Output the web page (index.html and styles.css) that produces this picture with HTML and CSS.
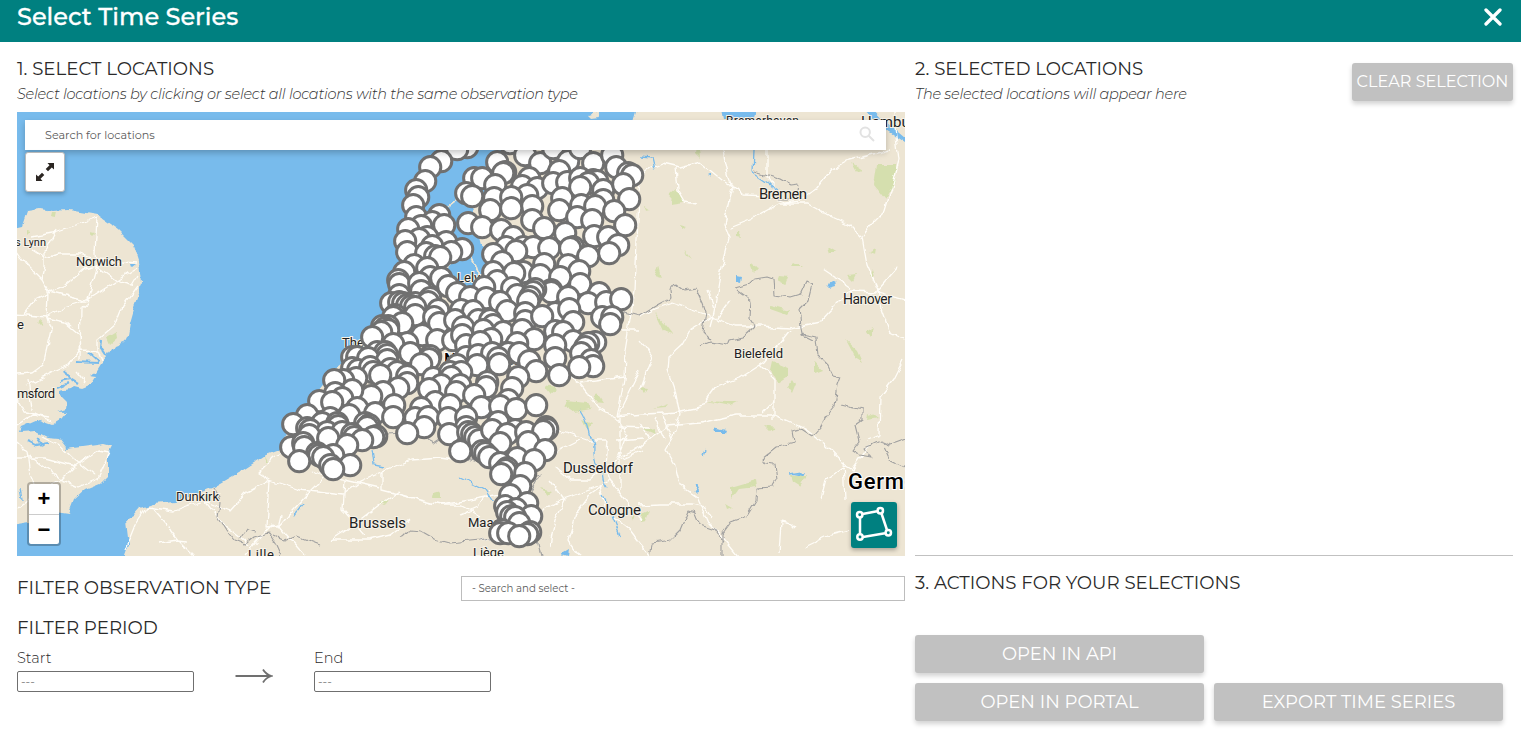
FILE: index.html
```html
<!DOCTYPE html>
<html lang="en">
<head>
<meta charset="utf-8">
<title>Select Time Series</title>
<link rel="stylesheet" href="styles.css">
</head>
<body>
<header class="topbar">
  <h1 class="topbar-title">Select Time Series</h1>
  <button class="close" aria-label="Close"><svg width="18" height="18" viewBox="0 0 18 18"><path d="M2 2 16 16M16 2 2 16"/></svg></button>
</header>
<main class="columns">
  <section class="left">
    <h2 class="heading h-locations">1. SELECT LOCATIONS</h2>
    <p class="hint hint-left">Select locations by clicking or select all locations with the same observation type</p>
    <div class="map">
      <svg class="map-canvas" width="888" height="444" viewBox="17 112 888 444">
        <defs>
          <marker id="pin" markerUnits="userSpaceOnUse" markerWidth="26" markerHeight="26" refX="13" refY="13" viewBox="0 0 26 26"><circle class="pin" cx="13" cy="13" r="10.600"/></marker>
          <filter id="rough" filterUnits="userSpaceOnUse" x="0" y="95" width="925" height="480" color-interpolation-filters="sRGB">
            <feTurbulence type="fractalNoise" baseFrequency="0.09" numOctaves="2" seed="4"/>
            <feDisplacementMap in="SourceGraphic" scale="7" xChannelSelector="R" yChannelSelector="G"/>
          </filter>
        </defs>
        <rect class="sea" x="17" y="112" width="888" height="444"/>
        <g filter="url(#rough)">
        <!-- England -->
        <path class="land" d="M3 230L22 226L27 211L40 209L52 211L68 210L98 215L118 229L134 245L139 261L141 283L138 298L134 309L130 323L128 334L124 342L114 346L107 357L101 364L96 372L90 375L97 376L92 384L82 388L74 386L70 389L60 391L60 395L67 402L66 409L50 414L38 411L67 412L60 420L52 425L38 420L22 427L20 432L36 431L48 437L60 438L67 447L66 449L82 447L104 444L112 446L108 454L108 476L100 484L85 490L74 500L69 513L55 511L42 520L3 526Z"/>
        <path class="water-line" d="M28 441 36 445 48 443M38 437 44 446M77 362 97 363M88 352 98 361M102 340 101 348 107 357M60 381 70 379 78 384M65 370 72 382M58 388 68 384"/>
        <!-- Continent -->
        <path class="land" d="M125 580L125 556L129 545L126 520L133 516L140 508L153 504L176 502L199 493L214 487L240 472L266 455L280 450L290 425L330 375L365 345L390 300L404 250L416 217L434 212L447 216L445 235L462 247L464 262L447 274L455 290L480 297L495 290L488 270L480 237L470 215L480 200L494 178L503 154L535 140L630 150L632 122L640 95H930V580Z"/>
        <path class="sea" d="M463 254L483 246L494 264L492 286L476 288L458 281L447 270ZM719 95H758L754 120H724ZM848 95H861L886 122L905 138V143L880 126Z"/>
        <path class="land" d="M589 115 598 112 600 117 592 118Z"/>
        <g class="wood">
          <path d="M877 165L896 165 895 181 885 199 874 185ZM671 194 677 189 684 202 670 204ZM736 230 742 237 736 236ZM779 276 788 277 785 285 777 281ZM750 264 757 267 753 272ZM770 306 790 311 787 315 770 309ZM697 137 700 157 695 152ZM772 362 787 368 787 377 778 383 770 371ZM815 362 823 371 815 374ZM846 340 858 351 863 362 855 357ZM731 487 755 480 756 487 739 489 731 499ZM791 475 808 475 801 486 793 481ZM725 505 732 509 727 511ZM794 379 797 384 793 394 788 387ZM763 426 775 428 769 432ZM655 312 667 325 674 334 664 331ZM852 163 863 170 857 172ZM668 404 654 409 665 408ZM705 401 730 406 738 402 726 402ZM544 386 557 388 550 394ZM566 400 588 402 591 409 574 412 563 405ZM597 393 603 402 594 401ZM640 387 648 388 645 393ZM642 514 650 510 646 521 641 522ZM868 412 877 418 867 420ZM684 250 691 259 687 256ZM876 248 875 254 868 252ZM874 327 866 332 870 338ZM687 226 682 229 680 224ZM645 206 651 210 646 211ZM654 275 658 266 661 277ZM52 212 57 212 56 217 51 216ZM107 338 117 332 118 338 110 345ZM38 322 42 319 41 325ZM26 230V235L30 231ZM90 231 95 232 92 235ZM264 456 267 462 265 462ZM433 495 440 493 440 499 432 499ZM630 512 634 513 632 520ZM540 488 552 491 547 495ZM380 502 389 499 386 505ZM582 420 592 424 588 431ZM643 430 656 428 655 435ZM795 262 802 266 792 266ZM828 246 838 252 830 252ZM848 275 856 274 853 280ZM870 276 873 270 875 277Z"/>
        </g>
        <g class="road">
          <path d="M32 237 52 233 70 227 97 218 95 253 97 268 87 303 81 308 80 360M56 230 44 252 44 267 41 280 48 292 47 318 51 330 43 365 32 373 17 374M17 252 26 265 41 280M32 250 44 258 60 254 80 254 96 260 137 263M24 314 35 300 66 285 85 269 97 266 118 282 132 285 138 275M48 292 85 301 112 284 118 280 137 268M17 314 47 317 62 308 84 301M47 318 65 322 80 335 81 350 68 365 51 373 25 387M97 350 97 340 115 325 122 307 138 286M81 350 98 351 102 362M76 371 85 382M17 398 24 412 34 414 52 422M28 380 32 410M17 425 32 415 50 418M17 442 27 452 30 475 34 485M17 458 45 458 75 466 62 479 40 490 17 509M75 466 98 450 110 452 98 479 78 487 60 479 30 457M42 436 58 444 75 460 95 476"/>
          <path d="M125 550 135 525 147 507 175 511 205 500 224 525 250 545M151 507 165 523 178 540 195 557M205 500 230 511 246 493 270 480M187 541 178 540 160 543M270 480 267 527 278 525 305 556M270 480 258 473 273 458 290 450M270 480 300 490 343 495 360 482 382 472 382 490 440 505 470 500 520 490 530 480M278 527 293 509 308 493 323 478 340 467 360 454M245 555 263 534 272 525 278 527 281 515M330 541 354 525 380 505 399 491M382 472 412 460 440 458 460 461M312 470 345 480 380 488M330 540 370 540 390 535 410 520"/>
          <path d="M640 177 652 168 663 163 680 167 700 162 722 180 733 186 743 196 770 197 785 202 800 200 815 190 831 170 850 160 890 150M723 150 729 178 733 188 724 224 730 237 720 275 714 312 710 327M676 168 678 190 685 202 698 204M730 227 755 217 780 203 807 203 830 216 850 225 862 237 867 265 878 290 880 305 890 333 905 340M862 237 870 226 885 211 894 180 899 160 893 112M640 317 655 309 672 303 712 317 735 326 760 326 790 328 820 322 833 308 850 291 878 292 915 303M714 307 708 290M717 318 730 300M824 270 842 282 852 289M877 291 898 267M767 150 767 177 780 197M714 315 690 330 682 345 669 357 668 370 675 390 680 415 672 440 666 450 675 465 680 485 697 497 708 522 725 540 738 556M640 390 652 357 640 340M617 459 640 447 667 426 700 423 735 415 775 415 805 429 825 444 843 463 852 470 870 445M617 417 645 414 680 412 700 408 715 387 740 378 765 362 775 349 790 330M760 365 774 380 774 420M774 400 762 413M640 505 660 504 692 504 705 507 712 519M555 467 570 480 590 480 606 466 642 450M607 440 605 465 610 480 625 500 642 520M610 480 590 494 575 515 568 540 580 556M550 480 565 500 555 520 550 545M617 459 627 434 618 420 600 410 580 385 560 370M580 383 625 377M525 408 560 430 590 440 607 440M617 417 624 380 625 350 635 290 637 240 640 175M610 330 640 330M640 370 620 410 620 490M617 427 650 428M843 463 845 500M852 470 845 466 826 480 821 499M779 553 781 522 790 524 795 529M805 547 830 535 850 530M867 440 879 435 880 397 893 380 903 360"/>
          <path d="M616 440 644 438M655 418 665 440M662 415 672 440M640 423 650 440M480 540 500 535 560 500 600 485M600 485 605 510 630 530 650 556M525 480 560 450 580 440M460 515 478 507 490 490M345 480 343 510 365 535M440 505 462 505 480 515"/>
        </g>
        <g class="river">
          <path d="M580 410C590 425 587 435 592 440S590 455 598 465 600 480 607 489M754 150 753 173 765 181 778 190M640 156 652 157 655 170M372 450 374 465 384 467M460 478 485 490 500 512 540 530M715 430 722 432 725 429M790 474 802 472M694 491 699 485M703 455 705 450M294 515 303 503M602 495 610 510 620 535M20 488 22 500"/>
        </g>
        <g class="lake"><path d="M825 285 834 280 835 286 828 288ZM737 275 742 276 741 282 737 281ZM708 175 712 173 712 177ZM714 430 722 431 725 429 724 433 715 433ZM694 492 697 485 700 485 697 491ZM793 474 806 472 804 476ZM562 554 569 550 568 556ZM131 264 136 264 132 267Z"/></g>
        <g class="border">
          <path d="M213 488 220 502 218 518 225 529 235 541 245 545 255 537 268 533 276 545 281 556M240 540 247 530 256 532M272 535 285 541 297 536 320 545M337 443 343 448 345 432 362 432 372 445 375 435 400 433M427 440 433 443 445 435 460 457 480 463 520 480 540 475 532 490 525 510 530 530 540 545 543 556M400 537 405 535 410 530 421 531 435 539 450 543 480 540 495 536"/>
          <path d="M610 325 625 312 640 316 658 305 671 298 670 290 675 284 683 290 695 288 702 303 705 312 702 332 710 340M736 288 750 284 755 279 767 277 773 279 774 295 790 297 800 294 806 281 812 284 808 300 799 309 800 318 802 335 812 340M737 290 751 300 750 318 755 326 743 337 730 340 728 345 710 342 700 346M802 334 816 337 818 355 828 365 833 375 841 377 838 385 835 405 825 417 821 427 812 437 800 429 792 431 794 443 777 447 762 459 765 463 775 464 777 480 773 487 757 488 756 501 747 516 730 522 722 533 722 560M841 404 862 409 862 420 855 425 859 441 852 450 860 455 871 457 865 448 880 441 890 445 915 436M884 447 890 460 915 472M650 560 652 543 670 540 680 530 688 511 695 513 700 525 715 530 723 542M755 172 765 175 781 180 790 185 798 184 796 198 787 199 772 199"/>
        </g>
        <path class="road dike" d="M438 214 463 195M468 252 475 264 479 277"/>
        </g>
        <g class="place">
          <text x="15" y="246" textLength="31" font-size="11">s Lynn</text>
          <text x="76" y="265.500" textLength="46" font-size="13">Norwich</text>
          <text x="17" y="329" font-size="13">e</text>
          <text x="17" y="398" textLength="38" font-size="13">msford</text>
          <text x="176" y="500.500" textLength="43" font-size="13">Dunkirk</text>
          <text x="349" y="528" textLength="57" font-size="15">Brussels</text>
          <text x="248" y="559" textLength="26" font-size="13">Lille</text>
          <text x="473" y="557" textLength="31" font-size="13">Liège</text>
          <text x="468" y="527" font-size="13">Maastricht</text>
          <text x="588" y="515" textLength="53" font-size="15">Cologne</text>
          <text x="563" y="473" textLength="70" font-size="15">Dusseldorf</text>
          <text x="734" y="357.500" textLength="49" font-size="13">Bielefeld</text>
          <text x="843" y="304" textLength="49" font-size="14">Hanover</text>
          <text x="759" y="199" textLength="48" font-size="15">Bremen</text>
          <text x="726" y="125" textLength="73" font-size="12">Bremerhaven</text>
          <text x="861" y="127" font-size="15">Hamburg</text>
          <text x="457" y="282" font-size="13">Lelystad</text>
          <text x="342" y="347" font-size="13">The Hague</text>
          <text class="country" x="444" y="365" font-size="17">Netherlands</text>
          <text class="country" x="848" y="489" textLength="93" font-size="22">Germany</text>
        </g>
        <polyline class="pins" transform="translate(.2 .2)" points="467,147 457,149 441,161 430,167 425,181 416,190 418,197 413,205 510,143 525,155 540,163 553,148 568,161 580,148 593,163 612,155 616,167 628,173 632,175 497,162 505,172 503,173 474,178 482,178 495,185 529,178 559,171 522,186 537,188 553,183 567,182 580,178 593,180 597,181 588,183 580,187 603,190 623,184 629,199 466,193 472,196 527,195 494,198 511,197 562,198 603,200 581,205 595,206 532,206 490,210 511,208 559,210 614,211 577,217 592,220 532,220 468,223 482,227 501,230 544,228 565,233 625,225 594,236 608,237 618,245 609,253 513,237 506,247 493,254 523,247 533,247 516,251 549,248 573,247 570,248 588,256 502,262 544,264 568,265 579,271 493,272 523,272 514,273 540,275 560,277
        416,217 439,215 432,222 421,226 444,225 408,229 427,237 419,239 405,241 446,242 432,246 407,252 462,249 451,252 426,253 435,256 440,257 414,265 404,272 427,268 430,277 398,280 399,284 419,283 441,278 448,286 421,291 399,295 457,293 497,281 484,287 470,297 512,288 486,298 517,295 500,302 551,290 551,292 535,289 533,292 530,297 528,301 580,284 568,297 599,293 588,303 606,302 621,299
        391,303 399,302 403,303 407,305 415,303 430,298 428,302 411,306 415,307 438,310 395,315 393,317 415,315 402,323 461,310 434,317 473,311 439,323 507,311 525,313 525,321 555,313 542,316 569,309 573,322 602,317 612,317 610,324 455,320 478,320 490,320 463,327 493,325 483,330 503,332 522,330 555,331 563,332 534,339 573,341
        388,326 382,326 385,328 388,330 381,332 372,337 422,335 407,343 393,344 437,340 453,340 462,335 466,345 491,339 480,342 515,347 517,343 555,345 595,342 588,343 585,347 581,353 555,358 591,360 593,366 579,367 559,375
        377,352 352,357 357,357 385,352 387,355 368,358 387,360 410,353 430,356 429,359 421,364 466,357 478,355 492,353 508,353 519,353 457,365 498,358 499,364 477,365 529,361 536,371 352,368 358,370 370,367 373,372 390,369 397,372 380,375 407,376 356,378 343,380 334,380 407,383 398,388 383,392 371,396 352,390 335,393 319,401 342,398 332,402
        433,378 450,372 461,372 451,377 518,377 487,382 441,385 460,385 429,389 456,392 486,387 474,395 512,388 435,402 450,405 481,407 508,400 500,406 516,409 536,405 357,408 394,405 375,413 393,417 349,415 307,415 293,424 330,418 322,423 307,428 310,430 337,423 338,426 327,432 309,435 342,432 328,438 365,423 369,425 367,427 352,434 354,437 376,436 373,437 362,440 347,445 291,447 303,443 304,447 317,453 319,455 333,455 323,457 299,461 350,465 330,465 333,469
        421,408 415,418 428,417 424,427 407,433 448,418 466,417 466,427 449,434 468,432 472,434 475,437 479,440 460,451 498,422 492,430 515,430 507,434 526,432 546,427 547,429 543,431 528,442 500,443 545,450 482,451 485,453 489,457 517,458 500,463 534,460 507,468 505,470 501,474 525,473 520,486 510,495 527,503 505,506 516,509 507,512 511,516 531,516 515,517 519,523 502,530 500,533 508,533 530,532 527,534 519,536"/>
      </svg>
      <div class="search"><span class="search-text">Search for locations</span>
        <svg width="17" height="17" viewBox="0 0 17 17"><circle cx="6.200" cy="6.200" r="4.700"/><path d="M9.700 9.700 15 15"/></svg>
      </div>
      <button class="expand" aria-label="Expand"><svg width="20" height="20" viewBox="0 0 20 20"><path class="fill" d="M12.500 1H19v6.500L16.800 5.500 13 9.300 10.700 7 14.500 3.200ZM7.500 19H1v-6.500L3.200 14.500 7 10.700 9.300 13 5.500 16.800Z"/></svg></button>
      <div class="zoom"><button class="zoom-btn">+</button><button class="zoom-btn">−</button></div>
      <button class="polygon" aria-label="Draw polygon"><svg width="46" height="46" viewBox="0 0 46 46"><path d="M9 15V32M11.500 12 26 9.300M30.500 11.500 36 28M12 35 34 31.200"/><circle cx="8.700" cy="12.700" r="2.700"/><circle cx="29.300" cy="8.700" r="2.700"/><circle cx="37.300" cy="30.700" r="2.700"/><circle cx="9" cy="35" r="2.700"/></svg></button>
    </div>
    <div class="type-row">
      <h2 class="heading h-type">FILTER OBSERVATION TYPE</h2>
      <div class="type-select">- Search and select -</div>
    </div>
    <h2 class="heading h-period">FILTER PERIOD</h2>
    <div class="period">
      <label class="date"><span class="date-label">Start</span><input class="date-input" placeholder="---"></label>
      <svg class="arrow" width="38" height="16" viewBox="0 0 38 16"><path d="M.500 8H36M28 1.500Q31 6.500 36.500 8 31 9.500 28 14.500"/></svg>
      <label class="date"><span class="date-label">End</span><input class="date-input" placeholder="---"></label>
    </div>
  </section>
  <section class="right">
    <div class="selected">
      <div class="selected-text">
        <h2 class="heading h-selected">2. SELECTED LOCATIONS</h2>
        <p class="hint hint-right">The selected locations will appear here</p>
      </div>
      <button class="btn clear">CLEAR SELECTION</button>
    </div>
    <h2 class="heading h-actions">3. ACTIONS FOR YOUR SELECTIONS</h2>
    <div class="actions">
      <button class="btn b-api">OPEN IN API</button><span></span>
      <button class="btn b-portal">OPEN IN PORTAL</button>
      <button class="btn b-export">EXPORT TIME SERIES</button>
    </div>
  </section>
</main>
</body>
</html>
```
FILE: styles.css
```css
* { box-sizing: border-box; }
body { margin: 0; height: 734px; overflow: hidden; background: #fff; color: #2a2a2a; font-family: Montserrat, Inter, "Open Sans", sans-serif; }
h1, h2, p { margin: 0; font-weight: 400; }
button { border: 0; padding: 0; font-family: inherit; }
svg { display: block; fill: none; }

.topbar { height: 42px; padding: 0 19px 8px 17px; background: #008080; color: #fff; display: flex; justify-content: space-between; align-items: center; }
.topbar-title { font-size: 24px; font-weight: 500; line-height: 34px; white-space: nowrap; -webkit-text-stroke: .3px #fff; }
.close { background: none; }
.close svg { stroke: #fff; stroke-width: 3.300; stroke-linecap: round; }

.columns { display: grid; grid-template-columns: 888px 598px; column-gap: 10px; padding-left: 17px; }
.left { padding-top: 15px; }
.heading { font-size: 18.200px; line-height: 24px; white-space: nowrap; }
.hint { font-size: 14.500px; font-weight: 300; font-style: italic; letter-spacing: -.24px; line-height: 20px; white-space: nowrap; margin-top: 3px; color: #333; }

.map { position: relative; height: 444px; margin-top: 8px; overflow: hidden; }
.sea, .lake { fill: #78bbec; }
.land { fill: #ede5d3; }
.wood { fill: #d5dfae; }
.road { stroke: #fffdf8; stroke-width: 1.300; stroke-linejoin: round; }
.dike { stroke: #ede5d3; stroke-width: 2; }
.river { stroke: #78bbec; stroke-width: 1.300; }
.water-line { stroke: #78bbec; stroke-width: 2.200; }
.border { stroke: #a0a0a0; stroke-width: 1.100; stroke-linejoin: round; }
.place { font-family: Roboto, sans-serif; fill: #222; stroke: #f6f2e8; stroke-width: 2px; paint-order: stroke; }
.country { font-weight: 500; fill: #000; stroke: #fff; }
.pins { marker: url(#pin); }
.pin { fill: #fff; stroke: #707070; stroke-width: 3; }

.search { position: absolute; left: 8px; top: 8px; width: 861px; height: 30px; padding: 0 10px 0 20px; background: #fff; box-shadow: 0 3px 6px rgba(0,0,0,.22); display: flex; align-items: center; justify-content: space-between; font-size: 11.200px; color: #5c5c5c; }
.search svg { stroke: #e2e2e2; stroke-width: 2; margin-bottom: 2px; }
.expand { position: absolute; left: 8px; top: 40px; width: 40px; height: 40px; background: #fff; border: 1px solid #b9b9b9; border-radius: 3px; box-shadow: 0 2px 4px rgba(0,0,0,.25); display: grid; place-items: center; }
.expand .fill { fill: #2b2622; }
.zoom { position: absolute; left: 10px; top: 370px; width: 34px; height: 64px; border: 2px solid rgba(0,0,0,.25); border-radius: 4px; background: #fff; background-clip: padding-box; display: grid; grid-template-rows: 30px 30px; }
.zoom-btn { background: none; color: #000; font-family: "Liberation Sans", sans-serif; font-size: 22px; font-weight: 700; line-height: 28px; }
.zoom-btn + .zoom-btn { border-top: 1px solid #ccc; }
.polygon { position: absolute; left: 834px; top: 390px; width: 46px; height: 46px; background: #008080; border-radius: 3px; box-shadow: 0 2px 4px rgba(0,0,0,.3); }
.polygon svg { stroke: #fff; stroke-width: 2.500; }

.type-row { display: flex; justify-content: space-between; align-items: flex-start; height: 25px; margin-top: 20px; }
.type-select { width: 444px; height: 25px; padding-left: 10px; border: 1px solid #bdbdbd; font-size: 10.200px; line-height: 23px; color: #5c5c5c; }
.h-period { margin-top: 15px; }
.period { display: flex; margin-top: 7px; }
.date { display: flex; flex-direction: column; width: 177px; }
.date-label { font-size: 14.500px; font-weight: 300; line-height: 22px; height: 24px; }
.date-input { width: 177px; height: 21px; padding: 1px 3px; border: 1px solid #6f6f6f; border-radius: 2px; font-family: inherit; font-size: 12px; color: #777; }
.arrow { margin: 21px 41px 0; stroke: #707070; stroke-width: 1.800; }

.right { display: flex; flex-direction: column; }
.selected { height: 514px; padding-top: 15px; border-bottom: 1px solid #c1c1c1; display: flex; justify-content: space-between; align-items: flex-start; }
.btn { height: 38px; background: #c1c1c1; color: #fff; border-radius: 3px; box-shadow: 0 3px 5px rgba(0,0,0,.18); font-size: 18px; white-space: nowrap; }
.clear { width: 161px; margin-top: 6px; padding-bottom: 2px; font-size: 16.100px; }
.h-actions { margin-top: 15px; }
.actions { display: grid; grid-template-columns: 289px 289px; gap: 10px; margin-top: 40px; }
```
